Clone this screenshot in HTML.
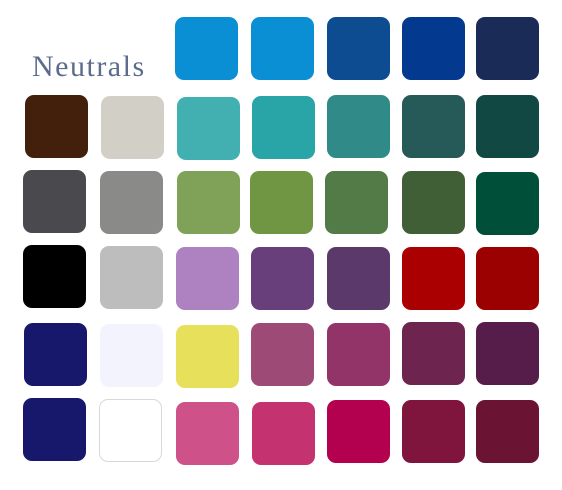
<!DOCTYPE html><html><head><style>
body{margin:0;width:562px;height:490px;background:#fff;position:relative;overflow:hidden}
.s{position:absolute;width:63px;height:63px;border-radius:9px}
.t{position:absolute;left:32px;top:50px;font-family:"Liberation Serif",serif;font-size:30px;color:#5d6b8c;letter-spacing:1.5px}
</style></head><body>
<div class="t">Neutrals</div>
<div class="s" style="left:175px;top:17px;background:#0a8fd4"></div>
<div class="s" style="left:251px;top:17px;background:#0a8fd4"></div>
<div class="s" style="left:327px;top:17px;background:#0e4c92"></div>
<div class="s" style="left:402px;top:17px;background:#03398f"></div>
<div class="s" style="left:476px;top:17px;background:#1a2b57"></div>

<div class="s" style="left:25px;top:95px;background:#43200c"></div>
<div class="s" style="left:101px;top:96px;background:#d2d0c6"></div>
<div class="s" style="left:177px;top:97px;background:#42b0b0"></div>
<div class="s" style="left:252px;top:96px;background:#2aa5a7"></div>
<div class="s" style="left:327px;top:95px;background:#308a87"></div>
<div class="s" style="left:402px;top:95px;background:#255a58"></div>
<div class="s" style="left:476px;top:95px;background:#124844"></div>

<div class="s" style="left:23px;top:170px;background:#4a4a4e"></div>
<div class="s" style="left:100px;top:171px;background:#8a8a89"></div>
<div class="s" style="left:177px;top:171px;background:#7fa258"></div>
<div class="s" style="left:250px;top:171px;background:#709543"></div>
<div class="s" style="left:325px;top:171px;background:#537b48"></div>
<div class="s" style="left:402px;top:171px;background:#405f36"></div>
<div class="s" style="left:476px;top:172px;background:#004f38"></div>

<div class="s" style="left:23px;top:245px;background:#000"></div>
<div class="s" style="left:100px;top:246px;background:#bdbdbd"></div>
<div class="s" style="left:176px;top:247px;background:#ae82c0"></div>
<div class="s" style="left:251px;top:247px;background:#683f7a"></div>
<div class="s" style="left:327px;top:247px;background:#5b3a6b"></div>
<div class="s" style="left:402px;top:247px;background:#aa0001"></div>
<div class="s" style="left:476px;top:247px;background:#9c0101"></div>

<div class="s" style="left:24px;top:323px;background:#17186c"></div>
<div class="s" style="left:100px;top:324px;background:#f3f3fd"></div>
<div class="s" style="left:176px;top:325px;background:#e6e05a"></div>
<div class="s" style="left:251px;top:323px;background:#9d4a76"></div>
<div class="s" style="left:327px;top:323px;background:#923468"></div>
<div class="s" style="left:402px;top:322px;background:#6d244f"></div>
<div class="s" style="left:476px;top:322px;background:#561d4a"></div>

<div class="s" style="left:23px;top:398px;background:#17186c"></div>
<div class="s" style="left:99px;top:399px;width:61px;height:61px;background:#fff;border:1px solid #d8d8d8"></div>
<div class="s" style="left:176px;top:402px;background:#cf5189"></div>
<div class="s" style="left:252px;top:402px;background:#c4336f"></div>
<div class="s" style="left:327px;top:400px;background:#b3004f"></div>
<div class="s" style="left:402px;top:400px;background:#7f153d"></div>
<div class="s" style="left:476px;top:400px;background:#6b1333"></div>
</body></html>
